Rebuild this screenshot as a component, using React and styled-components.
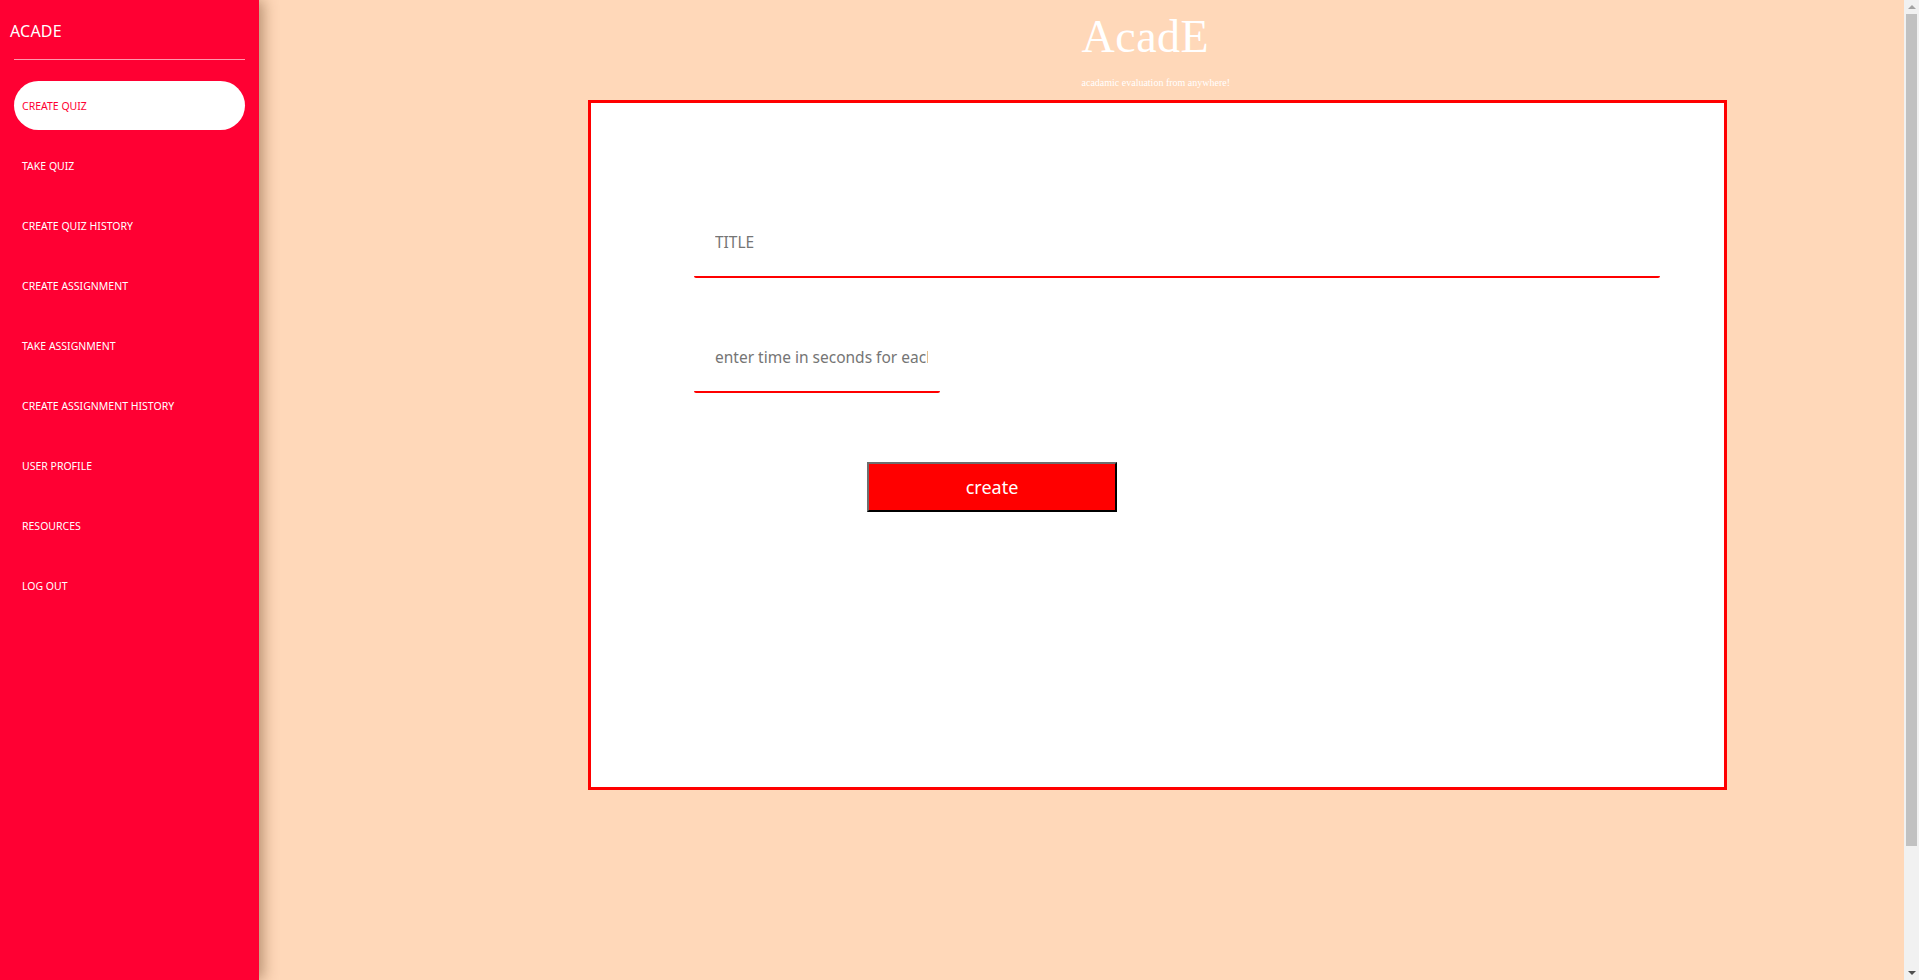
import React from "react";
import styled, { createGlobalStyle } from "styled-components";

const Global = createGlobalStyle`
  html, body { margin: 0; padding: 0; }
  body { background: #ffd8b9; font-family: "Noto Sans", "Open Sans", sans-serif; }
  * { box-sizing: border-box; }
`;

const Page = styled.div`
  display: flex;
  min-height: 1121px;
  background: #ffd8b9;
`;

const Sidebar = styled.aside`
  position: sticky;
  top: 0;
  align-self: flex-start;
  flex: 0 0 259px;
  height: 100vh;
  background: #ff0033;
  box-shadow: 4px 0 14px rgba(90, 50, 20, 0.45);
  z-index: 2;
  display: flex;
  flex-direction: column;
`;

const Brand = styled.div`
  color: #fff;
  font-size: 16px;
  padding: 20px 0 0 10px;
  height: 59px;
  letter-spacing: 0.2px;
`;

const Rule = styled.hr`
  margin: 0 14px;
  border: none;
  border-top: 1px solid rgba(255, 255, 255, 0.6);
  height: 0;
`;

const Nav = styled.nav`
  display: flex;
  flex-direction: column;
  gap: 11px;
  padding: 21px 14px 0;
`;

const NavItem = styled.a`
  display: flex;
  align-items: center;
  height: 49px;
  padding-left: 8px;
  border-radius: 25px;
  font-size: 10.5px;
  text-transform: uppercase;
  text-decoration: none;
  color: ${(p) => (p.$active ? "#ff0033" : "#fff")};
  background: ${(p) => (p.$active ? "#fff" : "transparent")};
`;

const Main = styled.main`
  flex: 1;
  display: flex;
  flex-direction: column;
`;

const Header = styled.header`
  padding-left: 50%;
  height: 100px;
  color: #fff;
  font-family: "Liberation Serif", "DejaVu Serif", serif;
`;

const Title = styled.h1`
  margin: 0;
  padding-top: 8px;
  font-size: 46px;
  font-weight: 400;
  line-height: 58px;
  letter-spacing: 0.5px;
`;

const Tagline = styled.p`
  margin: 11px 0 0;
  font-size: 10px;
  line-height: 12px;
`;

const Card = styled.section`
  margin-left: 329px;
  width: 1139px;
  height: 690px;
  background: #fff;
  border: 3px solid #ff0000;
  padding: 105px 0 0 103px;
  display: flex;
  flex-direction: column;
  align-items: flex-start;
`;

const Field = styled.input`
  width: ${(p) => p.$w}px;
  height: 70px;
  margin-bottom: ${(p) => p.$mb}px;
  padding: 0 12px 0 21px;
  border: none;
  border-bottom: 2px solid #ff0000;
  border-radius: 2px;
  outline: none;
  background: transparent;
  font-family: "Noto Sans", "Open Sans", sans-serif;
  font-size: 15.5px;
  color: #333;
  &::placeholder { color: #757575; }
`;

const CreateButton = styled.button`
  margin-left: 173px;
  width: 250px;
  height: 50px;
  background: #ff0000;
  color: #fff;
  border: 2px outset #767676;
  border-color: #6e6e6e #222 #222 #6e6e6e;
  font-family: "Noto Sans", "Open Sans", sans-serif;
  font-size: 18px;
  cursor: pointer;
`;

/* window scroll rail as it appears in the reference capture */
const Rail = styled.div`
  position: sticky;
  top: 0;
  align-self: flex-start;
  flex: 0 0 15px;
  height: 100vh;
  background: #f1f1f1;
  display: flex;
  flex-direction: column;
  align-items: center;
`;

const RailArrow = styled.div`
  flex: 0 0 14px;
  width: 15px;
  display: flex;
  justify-content: center;
  align-items: center;
`;

const Thumb = styled.div`
  width: 11px;
  height: 832px;
  background: #c1c1c1;
`;

const RailSpace = styled.div`
  flex: 1;
`;

const Arrow = ({ up }) => (
  <svg width="8" height="4" viewBox="0 0 8 4">
    <path d={up ? "M0 4 L4 0 L8 4 Z" : "M0 0 L8 0 L4 4 Z"} fill={up ? "#a3a3a3" : "#505050"} />
  </svg>
);

const items = [
  "Create Quiz",
  "Take Quiz",
  "Create Quiz History",
  "Create Assignment",
  "Take Assignment",
  "Create Assignment History",
  "User Profile",
  "Resources",
  "Log Out",
];

export default function App() {
  return (
    <>
      <Global />
      <Page>
        <Sidebar>
          <Brand>ACADE</Brand>
          <Rule />
          <Nav>
            {items.map((t, i) => (
              <NavItem key={t} href="#" $active={i === 0}>
                {t}
              </NavItem>
            ))}
          </Nav>
        </Sidebar>
        <Main>
          <Header>
            <Title>AcadE</Title>
            <Tagline>acadamic evaluation from anywhere!</Tagline>
          </Header>
          <Card>
            <Field $w={966} $mb={45} placeholder="TITLE" />
            <Field $w={246} $mb={69} placeholder="enter time in seconds for each question" />
            <CreateButton>create</CreateButton>
          </Card>
        </Main>
        <Rail>
          <RailArrow><Arrow up /></RailArrow>
          <Thumb />
          <RailSpace />
          <RailArrow><Arrow /></RailArrow>
        </Rail>
      </Page>
    </>
  );
}
